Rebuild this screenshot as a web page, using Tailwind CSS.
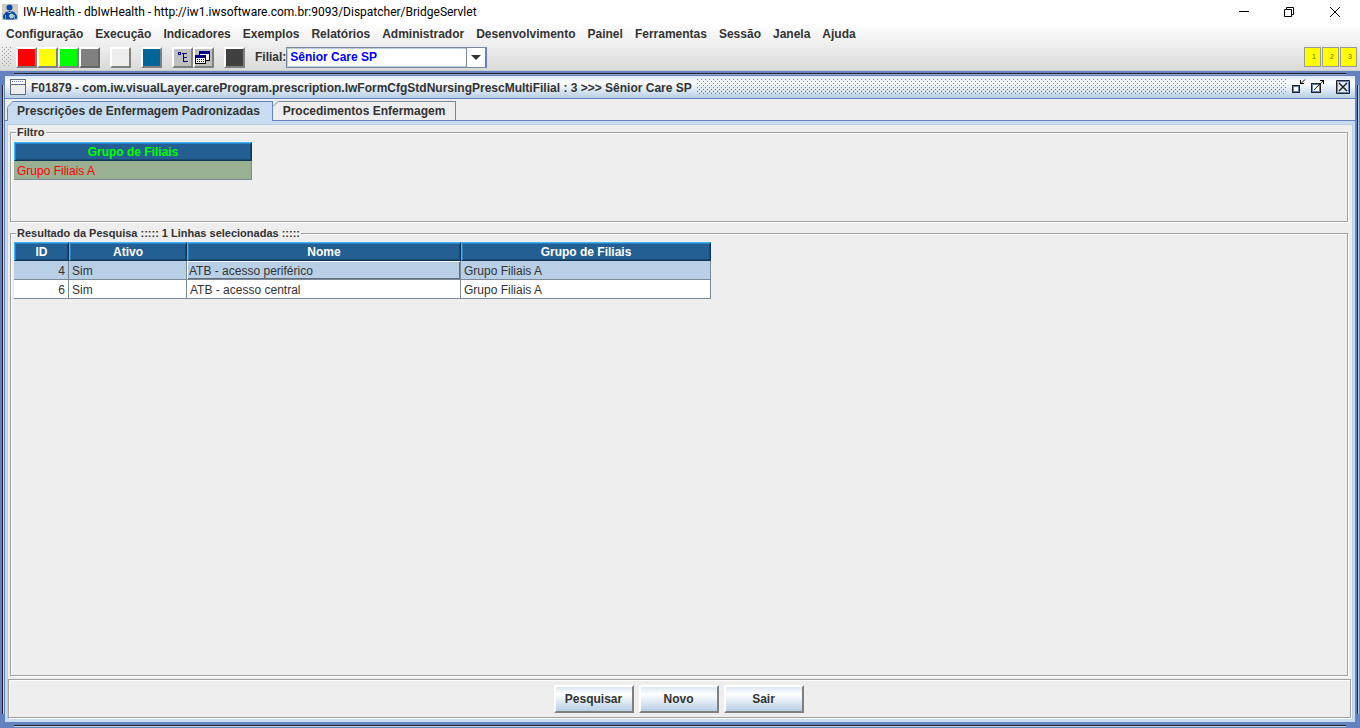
<!DOCTYPE html>
<html lang="pt-BR">
<head>
<meta charset="utf-8">
<title>IW-Health</title>
<script src="https://cdn.jsdelivr.net/npm/@tailwindcss/browser@4"></script>
</head>
<body class="h-screen flex flex-col overflow-hidden bg-white text-[#333333] text-[12px] leading-4 font-bold font-['Liberation_Sans',Arial,sans-serif]">

<!-- Window title bar -->
<header class="h-6 shrink-0 flex items-center pl-[2px] pr-[2px] bg-white text-black">
  <svg class="size-4 shrink-0" viewBox="0 0 16 16" aria-hidden="true"><path fill="#d0ccc4" d="M0 0h16v16H0z"/><path fill="#0a4ba0" d="M1 14.500v-3l2.500-3L6 7h4l2.500 1.500 2.500 3v3l-3 1H4z"/><circle cx="7.500" cy="3.500" r="3" fill="#0a4ba0"/><path d="M5.500 7l2 2 2-2" stroke="#dde" fill="none"/><circle cx="9.500" cy="12" r="2" fill="#9fd0c0" stroke="#fff" stroke-width=".6"/><path d="M3.500 11v4M12.500 11v4" stroke="#7aa6d8"/></svg>
  <h1 class="pl-[5px] font-normal text-[12px] font-[Roboto,'Open_Sans',sans-serif]">IW-Health - dbIwHealth - http://iw1.iwsoftware.com.br:9093/Dispatcher/BridgeServlet</h1>
  <div class="ml-auto flex h-5 items-center">
    <button aria-label="Minimizar" class="w-[45px] h-5 flex justify-center items-center"><svg width="10" height="10" viewBox="0 0 10 10"><path d="M0 4.500h10" stroke="#000"/></svg></button>
    <button aria-label="Restaurar" class="w-[45px] h-5 flex justify-center items-center"><svg width="10" height="10" viewBox="0 0 10 10" fill="none" stroke="#000"><path d="M.5 2.500h7v7h-7zM2.500 2V.5h7v7H8"/></svg></button>
    <button aria-label="Fechar" class="w-[47px] h-5 flex justify-center items-center"><svg width="10" height="10" viewBox="0 0 10 10"><path d="M0 0l10 10M10 0L0 10" stroke="#000"/></svg></button>
  </div>
</header>

<div class="shrink-0 bg-linear-to-b from-white to-[#dadada] border-b border-[#cccccc]">
  <nav class="h-5 flex items-center gap-3 pl-[6px]">
    <button class="font-bold">Configuração</button><button class="font-bold">Execução</button><button class="font-bold">Indicadores</button><button class="font-bold">Exemplos</button><button class="font-bold">Relatórios</button><button class="font-bold">Administrador</button><button class="font-bold">Desenvolvimento</button><button class="font-bold">Painel</button><button class="font-bold">Ferramentas</button><button class="font-bold">Sessão</button><button class="font-bold">Janela</button><button class="font-bold">Ajuda</button>
  </nav>
  <div class="h-[26px] flex items-center pl-[2px] pr-[3px]">
    <div class="w-[10px] h-5 mr-1 bg-[conic-gradient(from_270deg_at_1px_1px,#a0a0a0_90deg,transparent_0),conic-gradient(from_270deg_at_1px_1px,#a0a0a0_90deg,transparent_0)] bg-size-[4px_4px] [background-position:0_0,2px_2px]"></div>
    <button aria-label="Vermelho" class="size-[21px] bg-[#ff0000] border-2 border-t-white border-l-white border-r-[#808080] border-b-[#808080]"></button>
    <button aria-label="Amarelo" class="size-[21px] bg-[#ffff00] border-2 border-t-white border-l-white border-r-[#808080] border-b-[#808080]"></button>
    <button aria-label="Verde" class="size-[21px] bg-[#00ff00] border-2 border-t-white border-l-white border-r-[#808080] border-b-[#808080]"></button>
    <button aria-label="Cinza" class="size-[21px] bg-[#808080] border-2 border-t-white border-l-white border-r-[#666666] border-b-[#666666]"></button>
    <button aria-label="Claro" class="size-[21px] ml-[10px] bg-[#eeeeee] border-2 border-t-white border-l-white border-r-[#808080] border-b-[#808080]"></button>
    <button aria-label="Azul" class="size-[21px] ml-[10px] bg-[#006699] border-2 border-t-white border-l-white border-r-[#808080] border-b-[#808080]"></button>
    <button aria-label="Árvore" class="size-[21px] ml-[10px] bg-[#c0c0c0] border-2 border-t-white border-l-white border-r-[#808080] border-b-[#808080]"><svg width="17" height="17" viewBox="0 0 17 17" fill="none" stroke="#000080" shape-rendering="crispEdges"><path d="M4.500 3.500h2v2h-2zM8 4.500h5M9.500 4v9M9 8.500h4M9 12.500h5"/></svg></button>
    <button aria-label="Janelas" class="size-[21px] bg-[#c0c0c0] border-2 border-t-white border-l-white border-r-[#808080] border-b-[#808080]"><svg width="17" height="17" viewBox="0 0 17 17" shape-rendering="crispEdges"><path fill="#fff" stroke="#000" d="M4.500 2.500h10v9h-10z"/><path fill="#000080" d="M4 2h11v3H4z"/><path fill="#fff" stroke="#000" d="M.5 6.500h10v8H.5z"/><path fill="#000080" d="M0 6h11v3H0z"/><path stroke="#000" stroke-dasharray="1 1" d="M2 10.500h8M2 12.500h8"/></svg></button>
    <button aria-label="Escuro" class="size-[21px] ml-[10px] bg-[#404040] border-2 border-t-white border-l-white border-r-[#808080] border-b-[#808080]"></button>
    <label for="filial" class="ml-[10px]">Filial:</label>
    <div class="relative w-[201px] h-[21px]">
      <select id="filial" class="appearance-none block w-full h-full bg-white border border-[#7a8a99] pl-[3px] font-bold text-[#0000ff] shadow-[inset_1px_1px_0_#b8cfe5,inset_0_-1px_0_#b8cfe5]"><option>Sênior Care SP</option></select>
      <span class="absolute right-0 top-0 w-[21px] h-[21px] border border-[#7a8a99] border-r-2 border-r-[#6382bf] bg-white flex items-center justify-center pointer-events-none"><svg width="10" height="5" viewBox="0 0 10 5"><path d="M0 0h10L5 5z" fill="#333"/></svg></span>
    </div>
    <div class="ml-auto flex gap-px font-normal text-[7px] text-[#666600]">
      <button class="w-[17px] h-5 bg-[#ffff00] border border-[#999999] pl-[3px]">1</button><button class="w-[17px] h-5 bg-[#ffff00] border border-[#999999] pl-[3px]">2</button><button class="w-[17px] h-5 bg-[#ffff00] border border-[#999999] pl-[3px]">3</button>
    </div>
  </div>
</div>

<!-- Internal frame -->
<main class="relative flex-1 min-h-0 flex flex-col bg-[#6382bf] px-[5px] pt-[5px] pb-[6px]">
  <div class="absolute left-[14px] right-[14px] top-[2px] h-[2px] bg-[#222222] border-b border-[#8ea6d4]"></div>
  <div class="absolute left-[14px] right-[14px] bottom-[1px] h-[2px] bg-[#222222] border-b border-[#b8cfe5]"></div>
  <div class="absolute top-[14px] bottom-[14px] left-[2px] w-[2px] bg-[#222222] border-r border-[#b8cfe5]"></div>
  <div class="absolute top-[14px] bottom-[14px] right-[1px] w-[2px] bg-[#222222] border-r border-[#b8cfe5]"></div>

  <div class="h-[23px] shrink-0 flex items-center px-[5px] bg-linear-to-b from-[#dce8f4] via-white via-30% to-[#b8cfe5] border-b border-[#6382bf]">
    <svg class="shrink-0" width="16" height="16" viewBox="0 0 16 16" shape-rendering="crispEdges"><path fill="#eee" stroke="#5f6f80" d="M.5.5h15v15H.5z"/><path fill="#fff" d="M1 1h14v4H1z"/><path stroke="#6382bf" stroke-dasharray="1 1" d="M2 2.500h12"/><path stroke="#5f6f80" d="M1 5.500h14"/></svg>
    <h2 class="mx-[5px] pt-px">F01879 - com.iw.visualLayer.careProgram.prescription.IwFormCfgStdNursingPrescMultiFilial : 3 &gt;&gt;&gt; Sênior Care SP</h2>
    <div class="flex-1 h-4 bg-[conic-gradient(from_270deg_at_1px_1px,#6382bf_90deg,transparent_0),conic-gradient(from_270deg_at_1px_1px,#6382bf_90deg,transparent_0)] bg-size-[4px_4px] [background-position:0_0,2px_2px]"></div>
    <div class="flex items-center ml-[6px]">
      <button aria-label="Minimizar"><svg width="14" height="16" viewBox="0 0 14 16" fill="none" shape-rendering="crispEdges"><path fill="#fff" stroke="#222" d="M.5 6.500h7v7h-7z"/><path stroke="#6382bf" d="M1.500 7.500h5v5h-5z"/><path stroke="#000" d="M8.500 1v4M8 4.500h4"/><path shape-rendering="auto" stroke="#000" d="M9 4.500L13 .5"/></svg></button>
      <button aria-label="Maximizar" class="ml-[5px]"><svg width="14" height="16" viewBox="0 0 14 16" fill="none" shape-rendering="crispEdges"><path fill="#fff" stroke="#222" d="M.5 4.500h9v9h-9z"/><path stroke="#6382bf" d="M1.500 5.500h7v7h-7z"/><path stroke="#000" d="M9 1.500h4M12.500 1v4"/><path stroke="#222" shape-rendering="auto" d="M3 11l9-9"/></svg></button>
      <button aria-label="Fechar" class="ml-[11px]"><svg width="14" height="14" viewBox="0 0 14 14" fill="none"><path fill="#dce8f4" stroke="#222" d="M.5.5h13v13H.5z"/><path stroke="#6382bf" d="M1.500 1.500h11v11h-11z"/><path stroke="#222" stroke-width="1.500" d="M3 3l8 8M11 3l-8 8"/></svg></button>
    </div>
  </div>

  <div class="flex-1 min-h-0 flex flex-col bg-[#eeeeee] pt-[2px]">
    <div role="tablist" class="flex shrink-0 h-[20px] items-end border-b border-[#6382bf] pl-[2px]">
      <button role="tab" aria-selected="true" class="relative -mb-px w-[266px] h-[20px] pb-px font-bold bg-[#c8ddf2] border border-b-0 border-[#6382bf] text-center pr-[3px]"><svg class="absolute -left-px -top-px" width="7" height="7" viewBox="0 0 7 7" aria-hidden="true"><path fill="#eee" d="M0 0h7L0 7z"/><path stroke="#6382bf" d="M0 6.500L6.500 0"/></svg>Prescrições de Enfermagem Padronizadas</button>
      <button role="tab" aria-selected="false" class="relative w-[183px] h-[19px] font-bold bg-[#eeeeee] border border-b-0 border-l-0 border-[#7a8a99]"><svg class="absolute left-0 -top-px" width="6" height="6" viewBox="0 0 6 6" aria-hidden="true"><path fill="#eee" d="M0 0h6L0 6z"/><path stroke="#7a8a99" d="M0 5.500L5.500 0"/></svg>Procedimentos Enfermagem</button>
    </div>
    <div class="flex-1 min-h-0 flex flex-col border-t-[3px] border-x-2 border-b-[3px] border-[#c8ddf2]">
      <div class="flex-1 min-h-0 flex flex-col border border-[#b8cfe5]">
        <div class="flex-1 min-h-0 flex flex-col gap-1 pl-[2px] pr-1">
          <fieldset class="h-[97px] shrink-0 border border-[#a0a0a0] px-[3px] shadow-[1px_1px_0_white,inset_1px_1px_0_white]">
            <legend class="ml-[2px] px-[1px] bg-[#eeeeee] text-[11px] leading-[14px]">Filtro</legend>
            <table class="mt-[3px] w-[238px] border-separate border-spacing-0">
              <thead><tr><th class="h-[19px] p-0 leading-[14px] bg-[#235f92] text-[#00ff00] border border-t-[#3fb4ff] border-l-[#3fb4ff] border-r-[#0f3656] border-b-[#0f3656] shadow-[inset_1px_1px_0_#2a80c0,inset_-1px_-1px_0_#184a70]">Grupo de Filiais</th></tr></thead>
              <tbody class="font-normal"><tr><td class="h-[19px] p-0 pt-px pl-[3px] bg-[#99b093] text-[#ff0000] border-r border-b border-[#7a8a99]">Grupo Filiais A</td></tr></tbody>
            </table>
          </fieldset>
          <fieldset class="flex-1 min-h-0 border border-[#a0a0a0] px-[3px] shadow-[1px_1px_0_white,inset_1px_1px_0_white]">
            <legend class="ml-[2px] px-[1px] bg-[#eeeeee] text-[11px] leading-[14px]">Resultado da Pesquisa ::::: 1 Linhas selecionadas :::::</legend>
            <table class="mt-[2px] w-[697px] table-fixed border-separate border-spacing-0">
              <colgroup><col class="w-[55px]"><col class="w-[118px]"><col class="w-[274px]"><col class="w-[250px]"></colgroup>
              <thead class="text-white"><tr>
                <th class="h-[19px] p-0 leading-[14px] bg-[#235f92] border border-t-[#3fb4ff] border-l-[#3fb4ff] border-r-[#0f3656] border-b-[#0f3656] shadow-[inset_1px_1px_0_#2a80c0,inset_-1px_-1px_0_#184a70]">ID</th>
                <th class="h-[19px] p-0 leading-[14px] bg-[#235f92] border border-t-[#3fb4ff] border-l-[#3fb4ff] border-r-[#0f3656] border-b-[#0f3656] shadow-[inset_1px_1px_0_#2a80c0,inset_-1px_-1px_0_#184a70]">Ativo</th>
                <th class="h-[19px] p-0 leading-[14px] bg-[#235f92] border border-t-[#3fb4ff] border-l-[#3fb4ff] border-r-[#0f3656] border-b-[#0f3656] shadow-[inset_1px_1px_0_#2a80c0,inset_-1px_-1px_0_#184a70]">Nome</th>
                <th class="h-[19px] p-0 leading-[14px] bg-[#235f92] border border-t-[#3fb4ff] border-l-[#3fb4ff] border-r-[#0f3656] border-b-[#0f3656] shadow-[inset_1px_1px_0_#2a80c0,inset_-1px_-1px_0_#184a70]">Grupo de Filiais</th>
              </tr></thead>
              <tbody class="font-normal">
                <tr class="bg-[#b8cfe5]">
                  <td class="h-[19px] p-0 pt-px pr-[3px] text-right border-r border-b border-[#7a8a99]">4</td>
                  <td class="p-0 pt-px pl-[3px] border-r border-b border-[#7a8a99]">Sim</td>
                  <td class="p-0 pt-px pl-[2px] border-r border-b border-[#7a8a99] shadow-[inset_1px_1px_0_white,inset_-1px_-1px_0_#666c78]">ATB - acesso periférico</td>
                  <td class="p-0 pt-px pl-[3px] border-r border-b border-[#7a8a99]">Grupo Filiais A</td>
                </tr>
                <tr class="bg-white">
                  <td class="h-[19px] p-0 pt-px pr-[3px] text-right border-r border-b border-[#7a8a99]">6</td>
                  <td class="p-0 pt-px pl-[3px] border-r border-b border-[#7a8a99]">Sim</td>
                  <td class="p-0 pt-px pl-[3px] border-r border-b border-[#7a8a99]">ATB - acesso central</td>
                  <td class="p-0 pt-px pl-[3px] border-r border-b border-[#7a8a99]">Grupo Filiais A</td>
                </tr>
              </tbody>
            </table>
          </fieldset>
        </div>
        <div class="h-[39px] shrink-0 mt-[3px] mr-px pt-px pr-[2px] flex items-center justify-center gap-[5px] border border-[#a0a0a0] shadow-[1px_1px_0_white,inset_1px_1px_0_white]">
          <button class="w-20 h-[28px] font-bold bg-linear-to-b from-[#dce8f4] via-white via-30% to-[#b8cfe5] border-2 border-t-white border-l-white border-r-[#808080] border-b-[#808080]">Pesquisar</button>
          <button class="w-20 h-[28px] font-bold bg-linear-to-b from-[#dce8f4] via-white via-30% to-[#b8cfe5] border-2 border-t-white border-l-white border-r-[#808080] border-b-[#808080]">Novo</button>
          <button class="w-20 h-[28px] font-bold bg-linear-to-b from-[#dce8f4] via-white via-30% to-[#b8cfe5] border-2 border-t-white border-l-white border-r-[#808080] border-b-[#808080]">Sair</button>
        </div>
      </div>
    </div>
  </div>
</main>
</body>
</html>
